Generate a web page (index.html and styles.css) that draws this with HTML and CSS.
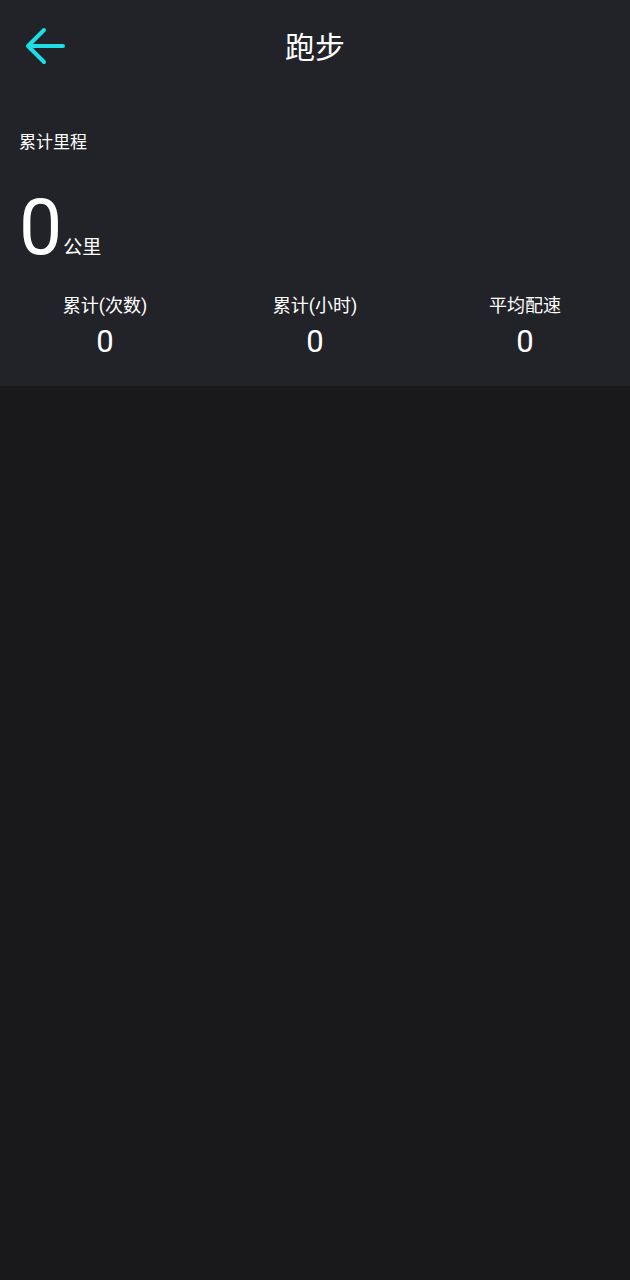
FILE: index.html
```html
<!DOCTYPE html>
<html lang="zh-CN">
<head>
    <meta charset="UTF-8">
    <meta name="viewport" content="width=device-width, initial-scale=1.0">
    <title>跑步</title>
    <link rel="stylesheet" href="styles.css">
</head>
<body>
    <div class="summary">
        <div class="top-bar">
            <span class="back">
                <svg width="44" height="40" viewBox="0 0 44 40">
                    <path d="M5 19 H39 M20 3 L4 19 L20 35" fill="none" stroke="#1ddde6" stroke-width="4" stroke-linecap="round" stroke-linejoin="round"/>
                </svg>
            </span>
            <h1 class="title">跑步</h1>
        </div>
        <div class="total-label">累计里程</div>
        <div class="total">
            <span class="total-num">0</span>
            <span class="total-unit">公里</span>
        </div>
        <div class="stats">
            <div class="stat">
                <div class="stat-label">累计(次数)</div>
                <div class="stat-value">0</div>
            </div>
            <div class="stat">
                <div class="stat-label">累计(小时)</div>
                <div class="stat-value">0</div>
            </div>
            <div class="stat">
                <div class="stat-label">平均配速</div>
                <div class="stat-value">0</div>
            </div>
        </div>
    </div>
</body>
</html>
```

FILE: styles.css
```css
body {
    margin: 0;
    background-color: #19191b;
    color: #ffffff;
    font-family: Roboto, "Noto Sans CJK SC", sans-serif;
    height: 1280px;
}
.summary {
    background-color: #222328;
    height: 386px;
    box-sizing: border-box;
}
.top-bar {
    position: relative;
    height: 94px;
    display: flex;
    align-items: center;
    justify-content: center;
}
.back {
    position: absolute;
    left: 24px;
    top: 27px;
    display: flex;
}
.title {
    margin: 0;
    font-size: 30px;
    font-weight: normal;
    line-height: 1;
    padding-top: 2px;
}
.total-label {
    font-size: 17px;
    line-height: 1;
    padding: 40px 0 0 19px;
}
.total {
    display: flex;
    align-items: baseline;
    padding-left: 19px;
    margin-top: 37px;
    height: 80px;
}
.total-num {
    font-size: 77px;
    line-height: 80px;
}
.total-unit {
    font-size: 19px;
    margin-left: 1px;
}
.stats {
    display: grid;
    grid-template-columns: repeat(3, 1fr);
    margin-top: 26px;
    text-align: center;
}
.stat-label {
    font-size: 18px;
    line-height: 24px;
}
.stat-value {
    font-size: 31px;
    line-height: 38px;
    margin-top: 5px;
}
```
